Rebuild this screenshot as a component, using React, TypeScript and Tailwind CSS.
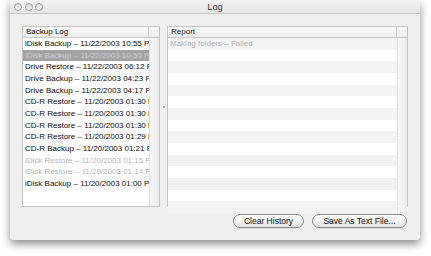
import type { ReactNode } from 'react'

const font = { fontFamily: '"Liberation Sans", Arial, sans-serif' }

interface LogEntry {
  label: string
  state: 'normal' | 'selected' | 'dim'
}

const entries: LogEntry[] = [
  { label: 'iDisk Backup – 11/22/2003 10:55 PM', state: 'normal' },
  { label: 'iDisk Backup – 11/22/2003 10:50 PM', state: 'selected' },
  { label: 'Drive Restore – 11/22/2003 06:12 PM', state: 'normal' },
  { label: 'Drive Backup – 11/22/2003 04:23 PM', state: 'normal' },
  { label: 'Drive Backup – 11/22/2003 04:17 PM', state: 'normal' },
  { label: 'CD-R Restore – 11/20/2003 01:30 PM', state: 'normal' },
  { label: 'CD-R Restore – 11/20/2003 01:30 PM', state: 'normal' },
  { label: 'CD-R Restore – 11/20/2003 01:30 PM', state: 'normal' },
  { label: 'CD-R Restore – 11/20/2003 01:29 PM', state: 'normal' },
  { label: 'CD-R Backup – 11/20/2003 01:21 PM', state: 'normal' },
  { label: 'iDisk Restore – 11/20/2003 01:15 PM', state: 'dim' },
  { label: 'iDisk Restore – 11/20/2003 01:14 PM', state: 'dim' },
  { label: 'iDisk Backup – 11/20/2003 01:00 PM', state: 'normal' },
]

function TrafficLight() {
  return (
    <span className="block size-[8px] rounded-full border border-[#a0a0a0] bg-gradient-to-b from-[#d6d6d6] to-[#f8f8f8]" />
  )
}

function TableHeader({ children }: { children: ReactNode }) {
  return (
    <div className="flex h-[11px] border-b border-[#c8c8c8] bg-gradient-to-b from-[#fafafa] to-[#eeeeee] text-[8px] leading-[10px] text-[#222]">
      <div className="flex-1 truncate border-r border-[#d0d0d0] pl-[3px]">{children}</div>
      <div className="w-[10px]" />
    </div>
  )
}

function PillButton({ children, width }: { children: ReactNode; width: string }) {
  return (
    <button
      type="button"
      className={`h-[14px] ${width} rounded-full border border-[#8c8c8c] bg-gradient-to-b from-[#ffffff] via-[#f4f4f4] to-[#e2e2e2] text-[8.5px] leading-[12px] text-[#111] shadow-[0_1px_0_rgba(0,0,0,0.08)]`}
    >
      {children}
    </button>
  )
}

export default function App() {
  return (
    <div className="h-[256px] w-[431px] overflow-hidden bg-white" style={font}>
      <div className="ml-[10px] flex h-[240px] w-[410px] flex-col rounded-b-[3px] bg-[#efefef] shadow-[0_4px_9px_rgba(0,0,0,0.45)]">
        {/* title bar */}
        <div className="relative flex h-[14px] items-center border-b border-[#c8c8c8] bg-gradient-to-b from-[#f4f4f4] to-[#e4e4e4]">
          <div className="flex gap-[2.5px] pl-[4px]">
            <TrafficLight />
            <TrafficLight />
            <TrafficLight />
          </div>
          <div className="absolute inset-0 text-center text-[9px] leading-[14px] text-[#333]">Log</div>
        </div>

        {/* body */}
        <div className="flex flex-1 flex-col px-[12px] pt-[12px]">
          <div className="flex h-[181px]">
            {/* backup log table */}
            <div className="flex w-[138px] flex-col border border-[#c4c4c4] bg-white">
              <TableHeader>Backup Log</TableHeader>
              <div className="flex flex-1">
                <div className="flex-1 overflow-hidden">
                  {entries.map((entry, i) => (
                    <div
                      key={i}
                      className={
                        'h-[11.67px] overflow-hidden whitespace-nowrap pl-[2px] text-[8px] leading-[11.67px] ' +
                        (entry.state === 'selected'
                          ? 'bg-[#a3a3a3] text-[#cfcfcf]'
                          : entry.state === 'dim'
                            ? 'text-[#b8b8b8]'
                            : 'text-[#0d0d0d]')
                      }
                    >
                      {entry.label}
                    </div>
                  ))}
                </div>
                <div className="w-[10px] border-l border-[#e2e2e2] bg-gradient-to-r from-[#f7f7f7] to-[#ececec]" />
              </div>
            </div>

            {/* splitter */}
            <div className="flex w-[7px] items-center justify-center">
              <span className="mt-[-20px] block size-[2px] rounded-full bg-[#9a9a9a]" />
            </div>

            {/* report table */}
            <div className="flex flex-1 flex-col border border-[#c4c4c4] bg-white">
              <TableHeader>Report</TableHeader>
              <div className="flex flex-1">
                <div className="flex-1 overflow-hidden">
                  {Array.from({ length: 15 }, (_, i) => (
                    <div
                      key={i}
                      className={
                        'h-[11.67px] whitespace-nowrap pl-[2px] text-[8px] leading-[11.67px] text-[#b8b8b8] ' +
                        (i % 2 === 0 ? 'bg-[#f3f3f3]' : 'bg-white')
                      }
                    >
                      {i === 0 ? 'Making folders – Failed' : ''}
                    </div>
                  ))}
                </div>
                <div className="w-[10px] border-l border-[#e2e2e2] bg-gradient-to-r from-[#f7f7f7] to-[#ececec]" />
              </div>
            </div>
          </div>

          {/* buttons */}
          <div className="mt-[7px] flex justify-end gap-[8px] pr-[1px]">
            <PillButton width="w-[71px]">Clear History</PillButton>
            <PillButton width="w-[95px]">Save As Text File...</PillButton>
          </div>
        </div>
      </div>
    </div>
  )
}
